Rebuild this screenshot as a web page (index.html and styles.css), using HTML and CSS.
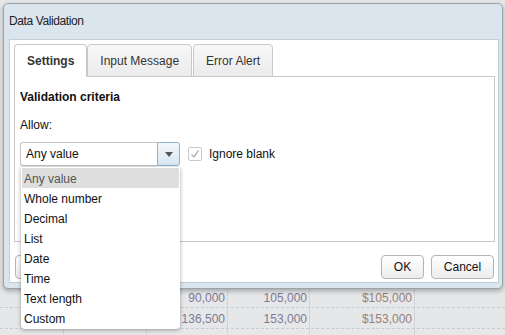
FILE: index.html
```html
<!DOCTYPE html>
<html lang="en">
<head>
  <meta charset="UTF-8">
  <title>Data Validation</title>
  <link rel="stylesheet" href="styles.css">
</head>
<body>
  <div class="sheet">
    <div class="row">
      <div class="cell"></div>
      <div class="cell"></div>
      <div class="cell num">90,000</div>
      <div class="cell num">105,000</div>
      <div class="cell num money">$105,000</div>
      <div class="cell last"></div>
    </div>
    <div class="row">
      <div class="cell"></div>
      <div class="cell"></div>
      <div class="cell num">136,500</div>
      <div class="cell num">153,000</div>
      <div class="cell num money">$153,000</div>
      <div class="cell last"></div>
    </div>
    <div class="row tail">
      <div class="cell"></div>
      <div class="cell"></div>
      <div class="cell"></div>
      <div class="cell"></div>
      <div class="cell"></div>
      <div class="cell last"></div>
    </div>
  </div>

  <div class="dialog">
    <div class="dialog-title">Data Validation</div>
    <div class="dialog-body">
      <div class="tabs">
        <div class="tab active">Settings</div>
        <div class="tab">Input Message</div>
        <div class="tab">Error Alert</div>
      </div>
      <div class="tab-content">
        <div class="section-title">Validation criteria</div>
        <div class="field-label">Allow:</div>
        <div class="allow-row">
          <div class="combo">
            <div class="combo-value">Any value</div>
            <div class="combo-btn"><span class="arrow"></span></div>
            <ul class="combo-list">
              <li class="selected">Any value</li>
              <li>Whole number</li>
              <li>Decimal</li>
              <li>List</li>
              <li>Date</li>
              <li>Time</li>
              <li>Text length</li>
              <li>Custom</li>
            </ul>
          </div>
          <span class="check">
            <svg width="12" height="12" viewBox="0 0 12 12"><path d="M2.5 6.5 L5 9 L9.5 2.5" fill="none" stroke="#b4b4b4" stroke-width="1.4"/></svg>
          </span>
          <span class="check-label">Ignore blank</span>
        </div>
      </div>
      <div class="buttons">
        <button class="btn clear"></button>
        <span class="spacer"></span>
        <button class="btn ok">OK</button>
        <button class="btn cancel">Cancel</button>
      </div>
    </div>
  </div>
</body>
</html>
```

FILE: styles.css
```css
body {
  margin: 0;
  font-family: "Liberation Sans", Arial, sans-serif;
  font-size: 12px;
  color: #111;
  background-color: #e6e7e9;
}
.sheet {
  height: 335px;
  display: flex;
  flex-direction: column;
  justify-content: flex-end;
}
.row {
  display: grid;
  grid-template-columns: 64px 83px 81px 82px 105px 1fr;
  height: 20px;
  border-bottom: 1px dashed #c9cacd;
}
.row.tail {
  height: 6px;
  border-bottom: none;
}
.cell {
  border-right: 1px solid #d2d3d6;
  line-height: 22px;
  padding-right: 2px;
}
.cell.last {
  border-right: none;
}
.num {
  text-align: right;
  color: #7f7a95;
}
.money {
  color: #958278;
}

.dialog {
  position: absolute;
  top: 3px;
  left: 3px;
  width: 498px;
  border: 1px solid #9aa2aa;
  border-radius: 5px;
  background-color: #dbe5ee;
  box-shadow: 0 2px 5px rgba(0, 0, 0, 0.3);
}
.dialog-title {
  height: 35px;
  line-height: 35px;
  padding-left: 5px;
  font-size: 12px;
  letter-spacing: -0.4px;
  color: #222;
}
.dialog-body {
  margin: 0 3px 5px 5px;
  border: 1px solid #c4ccd4;
  background-color: #fff;
  padding: 4px 3px 3px 4px;
}
.tabs {
  display: flex;
  height: 33px;
  margin-bottom: -1px;
  position: relative;
}
.tab {
  padding: 0 12px;
  line-height: 32px;
  border: 1px solid #c8c8c8;
  border-radius: 4px 4px 0 0;
  background: linear-gradient(#f7f7f7, #ebebeb);
  color: #333;
  margin-right: 1px;
}
.tab.active {
  background: #fff;
  border-bottom-color: #fff;
  font-weight: bold;
  margin-right: 0;
}
.tab-content {
  box-sizing: border-box;
  border: 1px solid #c8c8c8;
  height: 166px;
  padding: 12px 5px 0 5px;
}
.section-title {
  font-weight: bold;
  line-height: 16px;
}
.field-label {
  line-height: 16px;
  margin-top: 12px;
}
.allow-row {
  display: flex;
  align-items: center;
  margin-top: 9px;
}
.combo {
  position: relative;
  display: flex;
  width: 160px;
  height: 24px;
  z-index: 2;
}
.combo-value {
  flex: 1;
  border: 1px solid #c6c6c6;
  border-right: none;
  border-radius: 3px 0 0 3px;
  padding-left: 5px;
  line-height: 22px;
  box-shadow: 0 1px 1px rgba(0, 0, 0, 0.08);
}
.combo-btn {
  width: 21px;
  border: 1px solid #8fb3cf;
  border-radius: 0 3px 3px 0;
  background: linear-gradient(#f3f7fb, #d8e6f1);
  display: flex;
  align-items: center;
  justify-content: center;
}
.arrow {
  width: 0;
  height: 0;
  border-left: 4px solid transparent;
  border-right: 4px solid transparent;
  border-top: 5px solid #555;
  margin-top: 1px;
}
.combo-list {
  position: absolute;
  top: 25px;
  left: 1px;
  width: 157px;
  margin: 0;
  padding: 1px;
  list-style: none;
  background-color: #fff;
  border-radius: 0 0 4px 4px;
  box-shadow: 0 1px 4px rgba(0, 0, 0, 0.35);
}
.combo-list li {
  height: 20px;
  line-height: 22px;
  padding-left: 2px;
}
.combo-list li.selected {
  background-color: #dedede;
  color: #555;
}
.check {
  width: 12px;
  height: 12px;
  border: 1px solid #cacaca;
  border-radius: 2px;
  margin-left: 8px;
  display: flex;
  align-items: center;
  justify-content: center;
}
.check-label {
  margin-left: 7px;
}
.buttons {
  display: flex;
  margin-top: 13px;
  gap: 7px;
}
.spacer {
  flex: 1;
}
.btn {
  height: 24px;
  border: 1px solid #b4b4b4;
  border-radius: 4px;
  background: linear-gradient(#ffffff, #ececec);
  font-family: "Liberation Sans", Arial, sans-serif;
  font-size: 12px;
  color: #111;
  padding: 0;
}
.btn.clear {
  width: 70px;
  margin-left: 1px;
}
.btn.ok {
  width: 43px;
}
.btn.cancel {
  width: 63px;
  margin-right: 1px;
}
```
